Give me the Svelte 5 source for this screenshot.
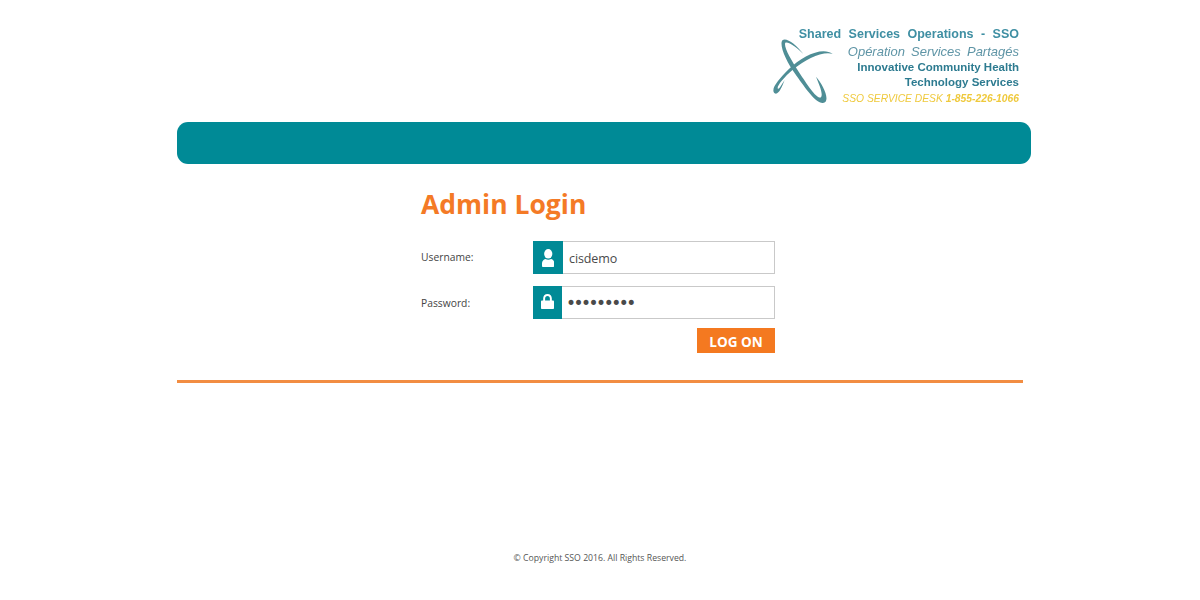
<script>
  let username = $state("cisdemo")
  let password = $state("123456789")
</script>

<div class="page">
  <header class="top">
    <div class="logo">
      <svg class="mark" viewBox="0 0 225 240" aria-hidden="true">
        <path d="M112 72C92 45 62 22 50 30C38 42 58 92 92 138C122 180 158 232 178 216C190 202 168 160 150 140C160 165 172 192 165 202C152 208 125 165 100 128C74 88 52 50 58 38C68 34 95 55 112 72Z" />
        <path d="M200 72C170 48 108 78 68 118C38 148 12 178 26 190C38 196 48 170 56 150C46 165 40 178 36 176C30 172 50 145 82 118C118 88 172 62 200 72Z" />
      </svg>
      <div class="logo-text">
        <div class="l1">Shared Services Operations - SSO</div>
        <div class="l2">Opération Services Partagés</div>
        <div class="l3">Innovative Community Health</div>
        <div class="l3">Technology Services</div>
        <div class="l5">SSO SERVICE DESK <b>1-855-226-1066</b></div>
      </div>
    </div>
  </header>

  <div class="bar"></div>

  <main class="login">
    <h1>Admin Login</h1>
    <form class="fields" onsubmit={(e) => e.preventDefault()}>
      <label for="user">Username:</label>
      <div class="field">
        <span class="ico">
          <svg viewBox="0 0 11 17" width="12.500" height="18" preserveAspectRatio="none" aria-hidden="true">
            <ellipse cx="5.500" cy="4.500" rx="3.600" ry="4.500" />
            <path d="M1 17C0.300 17 0 16.600 0 15.500V13.500C0 11.500 1.500 10 3 9.500C4.500 10.500 6.500 10.500 8 9.500C9.500 10 11 11.500 11 13.500V15.500C11 16.600 10.700 17 10 17Z" />
          </svg>
        </span>
        <input id="user" type="text" bind:value={username} />
      </div>

      <label class="pw" for="pass">Password:</label>
      <div class="field">
        <span class="ico ico-lock">
          <svg viewBox="0 0 12 14" width="13" height="15" preserveAspectRatio="none" aria-hidden="true">
            <path d="M1 6H2V4.200C2 1.700 3.500 0 6 0C8.500 0 10 1.700 10 4.200V6H11C11.600 6 12 6.400 12 7V13C12 13.600 11.600 14 11 14H1C0.400 14 0 13.600 0 13V7C0 6.400 0.400 6 1 6ZM3.800 6H8.200V4.200C8.200 2.700 7.400 1.800 6 1.800C4.600 1.800 3.800 2.700 3.800 4.200Z" fill-rule="evenodd" />
          </svg>
        </span>
        <input id="pass" type="password" bind:value={password} />
      </div>

      <button type="submit">LOG ON</button>
    </form>
  </main>

  <hr />

  <footer>© Copyright SSO 2016. All Rights Reserved.</footer>
</div>

<style>
  :global(body) {
    background: #fff;
    font-family: "Open Sans", "Liberation Sans", sans-serif;
  }

  .page {
    width: 846px;
    margin: 0 auto;
    height: 600px;
    box-sizing: border-box;
  }

  .top {
    height: 122px;
    display: flex;
    justify-content: flex-end;
    padding-right: 4px;
    box-sizing: border-box;
  }

  .logo {
    display: flex;
    align-items: flex-start;
    padding-top: 26px;
    font-family: "Liberation Sans", Arial, sans-serif;
    filter: blur(0.35px);
  }

  .mark {
    width: 75px;
    height: 80px;
    margin: 4px -42px 0 0;
    fill: #4f8e96;
  }

  .logo-text {
    text-align: right;
    white-space: nowrap;
  }

  .l1 {
    font-size: 12.500px;
    line-height: 16px;
    font-weight: bold;
    word-spacing: 4px;
    color: #3f8fa3;
  }

  .l2 {
    font-size: 13px;
    line-height: 17px;
    padding-top: 1px;
    font-style: italic;
    word-spacing: 2.500px;
    color: #5f95a6;
  }

  .l3 {
    font-size: 11.500px;
    line-height: 15px;
    font-weight: bold;
    color: #2d7b90;
  }

  .l5 {
    font-size: 10.300px;
    line-height: 17px;
    font-style: italic;
    color: #efc93c;
  }

  .bar {
    width: 854px;
    height: 42px;
    background: #008a96;
    border-radius: 11px;
  }

  .login {
    margin-left: 244px;
    width: 354px;
    height: 216px;
  }

  h1 {
    margin: 0;
    padding-top: 23px;
    font-size: 26.500px;
    line-height: 34px;
    font-weight: 700;
    color: #f47a26;
  }

  .fields {
    margin-top: 20px;
    display: grid;
    grid-template-columns: 112px 242px;
    row-gap: 12px;
    align-items: center;
  }

  label {
    font-size: 10.300px;
    color: #444;
    margin-top: -1px;
  }

  .pw {
    margin-top: 1px;
  }

  .field {
    display: flex;
    height: 33px;
    box-sizing: border-box;
    border: 1px solid #c9c9c9;
    border-left: 0;
  }

  .ico {
    width: 30px;
    margin: -1px 0;
    flex: none;
    display: flex;
    align-items: center;
    justify-content: center;
    background: #008a96;
    fill: #fff;
  }

  .ico-lock {
    width: 29px;
    padding-bottom: 2px;
    box-sizing: border-box;
  }

  input {
    flex: 1;
    min-width: 0;
    border: 0;
    outline: 0;
    padding: 2px 6px 0;
    font-family: "Open Sans", "Liberation Sans", sans-serif;
    font-size: 12.500px;
    letter-spacing: -0.100px;
    color: #4a4a4a;
    background: #fff;
  }

  #pass {
    padding: 0 0 0 4px;
    font-family: "DejaVu Sans", sans-serif;
    font-size: 17px;
    letter-spacing: -2.500px;
  }

  button {
    grid-column: 2;
    justify-self: end;
    margin-top: -3px;
    width: 78px;
    height: 25px;
    padding: 2px 0 0;
    border: 0;
    background: #f47920;
    color: #fff;
    font-family: "Open Sans", "Liberation Sans", sans-serif;
    font-size: 13.500px;
    font-weight: 700;
  }

  hr {
    margin: 0;
    height: 3px;
    border: 0;
    background: #f28d42;
  }

  footer {
    margin-top: 169px;
    text-align: center;
    font-size: 8.700px;
    line-height: 12px;
    color: #555;
  }
</style>
